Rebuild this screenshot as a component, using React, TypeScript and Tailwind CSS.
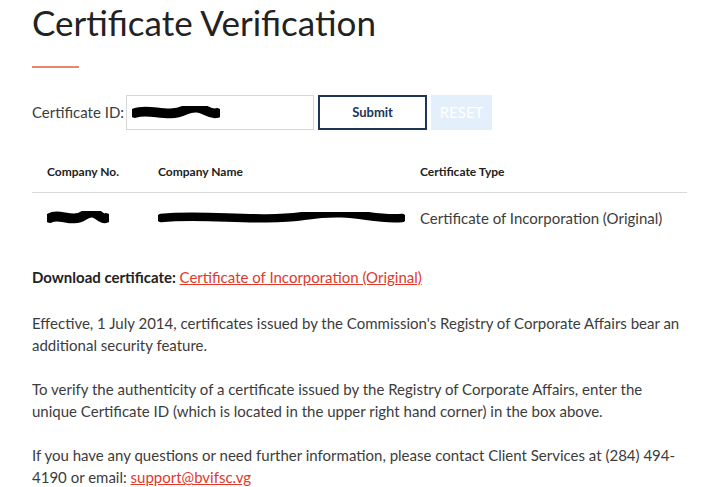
import React from "react";

function Scribble({ w, h }: { w: number; h: number }) {
  return (
    <svg width={w} height={h} viewBox={`0 0 ${w} ${h}`} className="block">
      <path
        d={`M3 ${h / 2} C ${w * 0.2} ${h * 0.1}, ${w * 0.4} ${h * 0.9}, ${w * 0.6} ${h * 0.3} S ${w * 0.85} ${h * 0.7}, ${w - 3} ${h / 2}`}
        stroke="#000"
        strokeWidth={h * 0.7}
        strokeLinecap="round"
        fill="none"
      />
    </svg>
  );
}

export default function App() {
  return (
    <div className="min-h-[487px] w-[710px] bg-white pl-8 pr-[23px] text-[#3c3c3c] font-['Lato',sans-serif]">
      <h1 className="text-[35px] leading-[44px] font-normal text-[#222]">
        Certificate Verification
      </h1>
      <div className="mt-[22px] h-[2px] w-[47px] bg-[#e8866f]" />

      <div className="mt-[27px] flex items-center h-[35px]">
        <label className="text-[15px] mr-[2px]">Certificate ID:</label>
        <div className="flex h-[35px] w-[188px] items-center border border-[#d6d6d6] pl-[5px]">
          <Scribble w={88} h={14} />
        </div>
        <button className="ml-[4px] h-[35px] w-[109px] border-2 border-[#1d3557] text-[13px] font-bold text-[#1d3557]">
          Submit
        </button>
        <button className="ml-[4px] h-[35px] w-[61px] bg-[#e4effc] text-[15px] text-white">
          RESET
        </button>
      </div>

      <div className="mt-[21px]">
        <div className="grid grid-cols-[126px_262px_1fr] h-[42px] items-center border-b border-[#d9d9d9] text-[12px] font-bold text-[#222]">
          <div className="pl-[15px]">Company No.</div>
          <div>Company Name</div>
          <div>Certificate Type</div>
        </div>
        <div className="grid grid-cols-[126px_262px_1fr] h-[50px] items-center text-[15px]">
          <div className="pl-[15px]">
            <Scribble w={62} h={14} />
          </div>
          <div>
            <Scribble w={247} h={12} />
          </div>
          <div>Certificate of Incorporation (Original)</div>
        </div>
      </div>

      <p className="mt-[23px] text-[15px] leading-[22px]">
        <span className="font-bold text-[#222]">Download certificate: </span>
        <a href="#" className="text-[#e2392a] underline">
          Certificate of Incorporation (Original)
        </a>
      </p>

      <div className="mt-[24px] space-y-[22px] text-[15px] leading-[22px]">
        <p>
          Effective, 1 July 2014, certificates issued by the Commission's Registry of
          Corporate Affairs bear an additional security feature.
        </p>
        <p>
          To verify the authenticity of a certificate issued by the Registry of Corporate
          Affairs, enter the unique Certificate ID (which is located in the upper right
          hand corner) in the box above.
        </p>
        <p>
          If you have any questions or need further information, please contact Client
          Services at (284) 494-4190 or email:{" "}
          <a href="#" className="text-[#e2392a] underline">
            support@bvifsc.vg
          </a>
        </p>
      </div>
    </div>
  );
}
